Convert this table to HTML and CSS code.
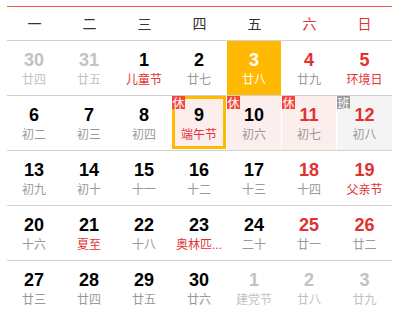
FILE: index.html
```html
<!DOCTYPE html>
<html lang="zh-CN">
<head>
<meta charset="utf-8">
<title>日历</title>
<link rel="stylesheet" href="styles.css">
</head>
<body>
<div class="cal">
  <div class="week">
    <div class="wd">一</div><div class="wd">二</div><div class="wd">三</div><div class="wd">四</div><div class="wd">五</div><div class="wd red">六</div><div class="wd red">日</div>
  </div>
  <div class="row">
    <div class="cell other"><span class="num">30</span><span class="lunar">廿四</span></div>
    <div class="cell other"><span class="num">31</span><span class="lunar">廿五</span></div>
    <div class="cell"><span class="num">1</span><span class="lunar fest">儿童节</span></div>
    <div class="cell"><span class="num">2</span><span class="lunar">廿七</span></div>
    <div class="cell today"><span class="num">3</span><span class="lunar">廿八</span></div>
    <div class="cell wkend"><span class="num">4</span><span class="lunar">廿九</span></div>
    <div class="cell wkend"><span class="num">5</span><span class="lunar fest">环境日</span></div>
  </div>
  <div class="row">
    <div class="cell"><span class="num">6</span><span class="lunar">初二</span></div>
    <div class="cell"><span class="num">7</span><span class="lunar">初三</span></div>
    <div class="cell"><span class="num">8</span><span class="lunar">初四</span></div>
    <div class="cell rest sel"><span class="badge">休</span><span class="num">9</span><span class="lunar fest">端午节</span></div>
    <div class="cell rest"><span class="badge">休</span><span class="num">10</span><span class="lunar">初六</span></div>
    <div class="cell rest wkend"><span class="badge">休</span><span class="num">11</span><span class="lunar">初七</span></div>
    <div class="cell work wkend"><span class="badge gray">班</span><span class="num">12</span><span class="lunar">初八</span></div>
  </div>
  <div class="row">
    <div class="cell"><span class="num">13</span><span class="lunar">初九</span></div>
    <div class="cell"><span class="num">14</span><span class="lunar">初十</span></div>
    <div class="cell"><span class="num">15</span><span class="lunar">十一</span></div>
    <div class="cell"><span class="num">16</span><span class="lunar">十二</span></div>
    <div class="cell"><span class="num">17</span><span class="lunar">十三</span></div>
    <div class="cell wkend"><span class="num">18</span><span class="lunar">十四</span></div>
    <div class="cell wkend"><span class="num">19</span><span class="lunar fest">父亲节</span></div>
  </div>
  <div class="row">
    <div class="cell"><span class="num">20</span><span class="lunar">十六</span></div>
    <div class="cell"><span class="num">21</span><span class="lunar fest">夏至</span></div>
    <div class="cell"><span class="num">22</span><span class="lunar">十八</span></div>
    <div class="cell"><span class="num">23</span><span class="lunar fest">奥林匹...</span></div>
    <div class="cell"><span class="num">24</span><span class="lunar">二十</span></div>
    <div class="cell wkend"><span class="num">25</span><span class="lunar">廿一</span></div>
    <div class="cell wkend"><span class="num">26</span><span class="lunar">廿二</span></div>
  </div>
  <div class="row last">
    <div class="cell"><span class="num">27</span><span class="lunar">廿三</span></div>
    <div class="cell"><span class="num">28</span><span class="lunar">廿四</span></div>
    <div class="cell"><span class="num">29</span><span class="lunar">廿五</span></div>
    <div class="cell"><span class="num">30</span><span class="lunar">廿六</span></div>
    <div class="cell other"><span class="num">1</span><span class="lunar">建党节</span></div>
    <div class="cell other"><span class="num">2</span><span class="lunar">廿八</span></div>
    <div class="cell other"><span class="num">3</span><span class="lunar">廿九</span></div>
  </div>
</div>
</body>
</html>
```
FILE: styles.css
```css
html, body {
  margin: 0;
  padding: 0;
  background: #fff;
}
body {
  padding: 6px 5px 0 7px;
  font-family: "Liberation Sans", "Noto Sans CJK SC", sans-serif;
}
.cal {
  width: 385px;
  border-top: 1px solid #f5544a;
}
.week {
  display: grid;
  grid-template-columns: repeat(7, 55px);
  height: 33px;
  border-bottom: 1px solid #d2d2d2;
}
.wd {
  line-height: 33px;
  text-align: center;
  font-size: 14px;
  font-family: "Noto Sans CJK SC", sans-serif;
  color: #333;
}
.wd.red { color: #e23131; }
.row {
  display: grid;
  grid-template-columns: repeat(7, 55px);
  height: 54px;
  border-bottom: 1px solid #d2d2d2;
}
.row.last { border-bottom: none; }
.cell {
  position: relative;
  margin-right: 1px;
  box-sizing: border-box;
  padding-top: 9px;
  text-align: center;
}
.cell:last-child { margin-right: 0; }
.num {
  display: block;
  font-size: 18px;
  line-height: 20px;
  font-weight: bold;
  color: #000;
}
.lunar {
  display: block;
  margin-top: 2px;
  font-size: 12px;
  line-height: 16px;
  color: #999;
  white-space: nowrap;
}
.lunar.fest { color: #e23131; }
.wkend .num { color: #e23131; }
.other .num, .other .lunar { color: #c2c2c2; }
.today { background: #ffb900; }
.today .num, .today .lunar { color: #fff; }
.rest { background: #fdeeee; }
.work { background: #f4f4f4; }
.sel {
  border: 3px solid #ffb900;
  padding-top: 6px;
  margin-bottom: 1px;
}
.badge {
  position: absolute;
  left: 0;
  top: 0;
  width: 13px;
  height: 13px;
  line-height: 13px;
  font-size: 12px;
  text-align: center;
  color: #fff;
  background: #f3463b;
  font-family: "Noto Sans CJK SC", sans-serif;
}
.sel .badge { left: -3px; top: -3px; }
.badge.gray { background: #9a9a9a; }
```
